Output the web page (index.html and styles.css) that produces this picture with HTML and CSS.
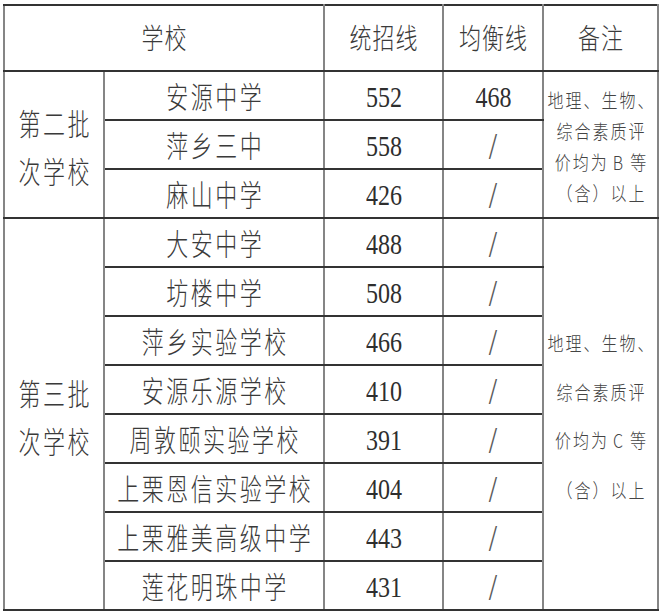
FILE: index.html
```html
<!DOCTYPE html>
<html lang="zh-CN">
<head>
<meta charset="utf-8">
<title>录取分数线</title>
<link rel="stylesheet" href="styles.css">
</head>
<body>
<table class="grid">
  <colgroup>
    <col class="c1"><col class="c2"><col class="c3"><col class="c4"><col class="c5">
  </colgroup>
  <tr class="head">
    <th colspan="2"><span class="h">学校</span></th>
    <th><span class="h">统招线</span></th>
    <th><span class="h">均衡线</span></th>
    <th><span class="h">备注</span></th>
  </tr>
  <tr>
    <td rowspan="3" class="grp"><span class="zh lines"><span class="ln">第二批</span><span class="ln">次学校</span></span></td>
    <td><span class="zh">安源中学</span></td>
    <td><span class="num">552</span></td>
    <td><span class="num">468</span></td>
    <td rowspan="3" class="note"><span class="nt nt2"><span class="ln">地理、生物、</span><span class="ln">综合素质评</span><span class="ln">价均为<span class="lat">B</span>等</span><span class="ln">（含）以上</span></span></td>
  </tr>
  <tr>
    <td><span class="zh">萍乡三中</span></td>
    <td><span class="num">558</span></td>
    <td><span class="sl">/</span></td>
  </tr>
  <tr>
    <td><span class="zh">麻山中学</span></td>
    <td><span class="num">426</span></td>
    <td><span class="sl">/</span></td>
  </tr>
  <tr>
    <td rowspan="8" class="grp"><span class="zh lines"><span class="ln">第三批</span><span class="ln">次学校</span></span></td>
    <td><span class="zh">大安中学</span></td>
    <td><span class="num">488</span></td>
    <td><span class="sl">/</span></td>
    <td rowspan="8" class="note"><span class="nt nt3"><span class="ln">地理、生物、</span><span class="ln">综合素质评</span><span class="ln">价均为<span class="lat">C</span>等</span><span class="ln">（含）以上</span></span></td>
  </tr>
  <tr>
    <td><span class="zh">坊楼中学</span></td>
    <td><span class="num">508</span></td>
    <td><span class="sl">/</span></td>
  </tr>
  <tr>
    <td><span class="zh">萍乡实验学校</span></td>
    <td><span class="num">466</span></td>
    <td><span class="sl">/</span></td>
  </tr>
  <tr>
    <td><span class="zh">安源乐源学校</span></td>
    <td><span class="num">410</span></td>
    <td><span class="sl">/</span></td>
  </tr>
  <tr>
    <td><span class="zh">周敦颐实验学校</span></td>
    <td><span class="num">391</span></td>
    <td><span class="sl">/</span></td>
  </tr>
  <tr>
    <td><span class="zh">上栗恩信实验学校</span></td>
    <td><span class="num">404</span></td>
    <td><span class="sl">/</span></td>
  </tr>
  <tr>
    <td><span class="zh">上栗雅美高级中学</span></td>
    <td><span class="num">443</span></td>
    <td><span class="sl">/</span></td>
  </tr>
  <tr>
    <td><span class="zh">莲花明珠中学</span></td>
    <td><span class="num">431</span></td>
    <td><span class="sl">/</span></td>
  </tr>
</table>
</body>
</html>
```
FILE: styles.css
```css
html, body {
  margin: 0;
  padding: 0;
  background: #ffffff;
}
body {
  padding: 4px 0 0 3px;
  font-family: "Noto Sans CJK SC", sans-serif;
  color: #3a3a3a;
}
.grid {
  border-collapse: collapse;
  table-layout: fixed;
  width: 655px;
}
.c1 { width: 100px; }
.c2 { width: 220px; }
.c3 { width: 119px; }
.c4 { width: 100px; }
.c5 { width: 115px; }

.grid th,
.grid td {
  border-top: 2px solid #333333;
  border-bottom: 2px solid #333333;
  border-left: 2px solid #858585;
  border-right: 2px solid #858585;
  padding: 3px 0 0 0;
  text-align: center;
  vertical-align: middle;
  font-weight: 300;
  white-space: nowrap;
}
.grid tr { height: 49px; }
.grid tr.head { height: 66px; }
.grid th { padding-top: 0; }

.h {
  display: inline-block;
  font-size: 22px;
  letter-spacing: 1px;
  margin-right: -1px;
  line-height: 1;
  transform: scaleY(1.3);
}
.zh {
  display: inline-block;
  font-size: 22px;
  letter-spacing: 2.5px;
  margin-right: -2.5px;
  line-height: 1;
  transform: scaleY(1.33);
}
.lines .ln {
  display: block;
  line-height: 36px;
}
.grp { padding-top: 6px; }
.num {
  display: inline-block;
  font-family: "Liberation Serif", serif;
  font-size: 24px;
  line-height: 1;
  color: #2e2e2e;
  transform: scaleY(1.27);
  margin-left: 1px;
}
.sl {
  display: inline-block;
  font-family: "Liberation Serif", serif;
  font-size: 30px;
  line-height: 1;
  color: #5a5a5a;
  transform: scaleY(1.27);
}
.nt {
  display: inline-block;
  font-size: 16px;
  letter-spacing: 2px;
  margin-right: -2px;
  transform: scaleY(1.2);
  color: #444444;
}
.nt .ln { display: block; }
.nt2 .ln { line-height: 26px; }
.nt3 .ln { line-height: 40.5px; }
.lat {
  display: inline-block;
  margin: 0 7px 0 4px;
  letter-spacing: 0;
}
.note { padding-top: 5px; }
```
